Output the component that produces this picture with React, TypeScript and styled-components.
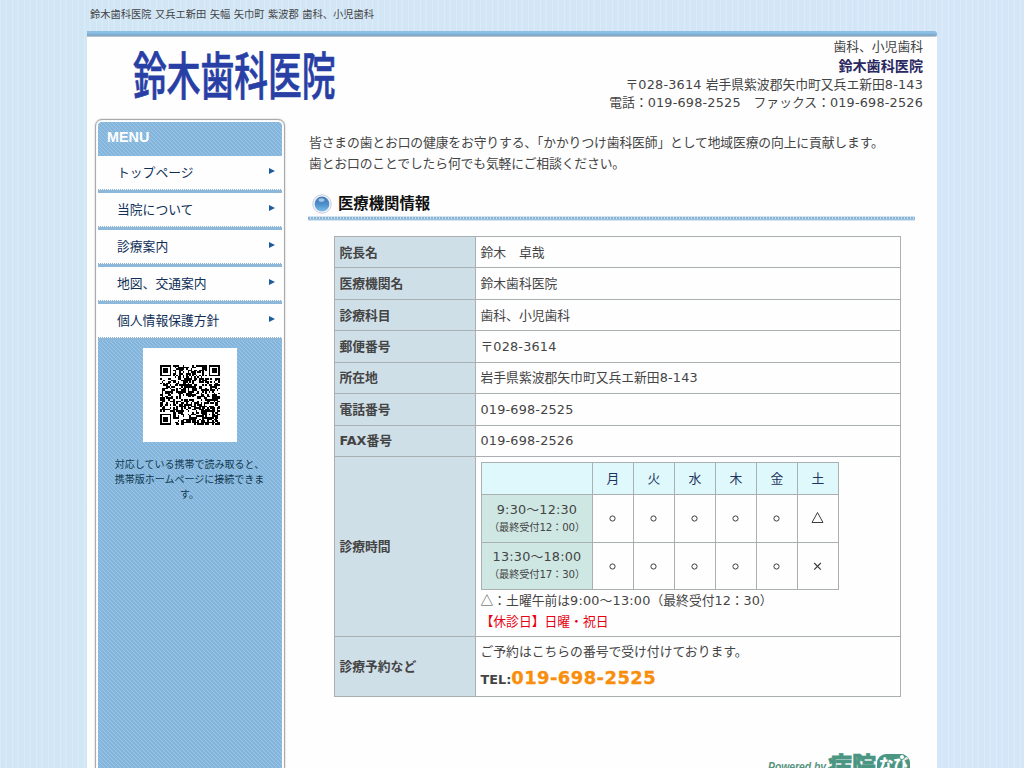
import React from "react";
import styled, { createGlobalStyle, css } from "styled-components";

const sans = `"DejaVu Sans", "Noto Sans CJK JP", sans-serif`;
const hatch = css`
  background-color: #84b6dd;
  background-image: repeating-linear-gradient(45deg, #9dc6e5 0 0.75px, transparent 0.75px 2.83px);
`;

const GlobalStyle = createGlobalStyle`
  * { box-sizing: border-box; }
  body {
    margin: 0;
    color: #444;
    font: 12.8px/21px ${sans};
    background:
      repeating-linear-gradient(90deg, rgba(255,255,255,.22) 0 1px, transparent 1px 5px, rgba(255,255,255,.13) 5px 7px, transparent 7px 12px),
      linear-gradient(90deg, #d1e6f5, #d4e6f8);
  }
`;

const Page = styled.div`
  width: 850px;
  height: 768px;
  margin: 0 87px;
  overflow: hidden;
  display: flex;
  flex-direction: column;
`;
const Tagline = styled.h1`
  height: 31px;
  flex: none;
  margin: 0;
  padding: 4px 0 0 3px;
  font-size: 10.24px;
  line-height: 20px;
  font-weight: 400;
  word-spacing: 0.3px;
  white-space: nowrap;
`;
const TopBar = styled.div`
  height: 6px;
  flex: none;
  border-radius: 0 3px 3px 0;
  background: linear-gradient(#8bbfe4 0 2px, #77a9d1 4px, #98a5b0 5px, #dbe5ed 6px);
`;
const Sheet = styled.div`
  flex: 1;
  min-height: 0;
  background: #fefefe;
`;
const Header = styled.header`
  display: flex;
  justify-content: space-between;
  height: 82px;
  padding-right: 14px;
`;
const Logo = styled.div`
  margin: 7px 0 0 46px;
  width: 204px;
  height: 58px;
  font: 500 51px/58px "Noto Sans CJK JP", sans-serif;
  color: #283fa5;
  -webkit-text-stroke: 0.7px #283fa5;
  white-space: nowrap;
  transform: scaleX(0.662);
  transform-origin: 0 0;
`;
const Contact = styled.address`
  padding-top: 0.5px;
  font-style: normal;
  text-align: right;
  line-height: 18px;
  white-space: nowrap;
`;
const ClinicName = styled.div`
  font-size: 14.1px;
  line-height: 20px;
  font-weight: 700;
  color: #2a2862;
`;
const Num = styled.span`
  letter-spacing: 0.2px;
`;

const Columns = styled.div`
  display: flex;
  align-items: flex-start;
`;
const Sidebar = styled.nav`
  width: 190px;
  height: 670px;
  flex: none;
  margin-left: 8px;
  padding: 2px;
  border: 1px solid #aaa;
  border-radius: 7px;
  box-shadow: inset 0 0 1px #bbb, 0 0 2px #bbb;
  background: #fff;
`;
const SidebarBody = styled.div`
  height: 100%;
  border-radius: 4px 4px 0 0;
  ${hatch}
`;
const MenuTitle = styled.div`
  height: 34px;
  padding: 5px 0 0 9px;
  font: bold 14.4px/21px "Liberation Sans", sans-serif;
  color: #fff;
`;
const MenuItem = styled.a`
  display: flex;
  justify-content: space-between;
  height: 37px;
  padding: 7px 7px 0 19px;
  border-bottom: 3px solid #8db8d9;
  background: repeating-linear-gradient(90deg, #8db3d0 0 1px, #fff 1px 2px) bottom / 100% 1px no-repeat padding-box, #fefefe;
  color: #103058;
  line-height: 20px;
`;
const Arrow = styled.span`
  width: 0;
  height: 0;
  margin-top: 5px;
  border: 3.5px solid transparent;
  border-left: 6px solid #1d5d9b;
  border-right: 0;
`;
const QrFrame = styled.div`
  width: 94px;
  height: 94px;
  margin: 7px auto 15px;
  padding: 17px;
  background: #fff;
`;
const QrNote = styled.p`
  margin: 0;
  padding: 0 16px 0 15px;
  font-size: 10px;
  line-height: 15px;
  text-align: center;
  color: #103850;
`;

const Main = styled.main`
  flex: 1;
  margin: 13px 22px 0 24px;
`;
const Intro = styled.p`
  margin: 0;
  height: 58px;
  letter-spacing: -0.13px;
  white-space: nowrap;
`;
const SectionTitle = styled.h2`
  display: flex;
  align-items: center;
  height: 31px;
  margin: 0 0 15px -1px;
  padding: 0 0 3px 4px;
  gap: 6px;
  color: #111;
  font-size: 15.36px;
  line-height: 24px;
  background:
    linear-gradient(#a3c3dc, #a3c3dc) bottom 1px left / 100% 1px no-repeat,
    repeating-linear-gradient(90deg, #85b2d7 0 2px, #c8dfee 2px 3px) bottom 2px left / 100% 2px no-repeat,
    linear-gradient(#d3e4f0, #d3e4f0) bottom / 100% 5px no-repeat;
`;

const InfoTable = styled.table`
  width: 567px;
  margin-left: 25px;
  border-collapse: collapse;
  table-layout: fixed;
  td, th { border: 1px solid #aaafb2; }
`;
const InfoRow = styled.tr<{ $height?: number }>`
  height: ${(p) => p.$height ?? 31.45}px;
`;
const Label = styled.th`
  width: 141px;
  padding: 0 4.4px;
  text-align: left;
  background: #cfdfe8;
`;
const Value = styled.td`
  padding: 0 4.5px;
`;

const HoursTable = styled.table`
  width: 358px;
  margin: 1px 0 0 0.5px;
  border-collapse: collapse;
  table-layout: fixed;
  text-align: center;
  td, th { padding: 0; }
`;
const DayHead = styled.th<{ $width: number }>`
  width: ${(p) => p.$width}px;
  height: 32px;
  background: #dff8fb;
  color: #1d3462;
  font-weight: 400;
`;
const Slot = styled.th`
  height: 47.6px;
  background: #cee7e3;
  font-weight: 400;
  line-height: 18px;
  small { display: block; font-size: 10.24px; line-height: 17px; letter-spacing: -0.15px; white-space: nowrap; }
`;
const Mark = styled.td`
  svg { display: block; margin: 0 auto; }
`;
const Symbol = styled.span`
  font-family: "Noto Sans CJK JP", sans-serif;
`;
const Note = styled.div`
  line-height: 20.5px;
`;
const Closed = styled(Note)`
  color: #e60012;
`;
const Tel = styled.div`
  margin-top: 2px;
  font-weight: 700;
  line-height: 27px;
  strong { font-size: 17.92px; letter-spacing: 0.45px; color: #f88e0b; -webkit-text-stroke: 0.3px #f88e0b; }
`;
const Powered = styled.footer`
  display: flex;
  justify-content: flex-end;
  margin: 54px 3px 0 0;
`;

const N = 37;
const inFinder = (x: number, y: number) => (x < 8 && y < 8) || (x >= N - 8 && y < 8) || (x < 8 && y >= N - 8);
const inAlign = (x: number, y: number) => Math.abs(x - 30) <= 2 && Math.abs(y - 30) <= 2;

function qrPath() {
  let seed = 2525;
  let d = "";
  for (let y = 0; y < N; y++) {
    for (let x = 0; x < N; x++) {
      seed = (seed * 1103515245 + 12345) % 2147483648;
      let on = (seed >> 16) % 100 < 51;
      if (inFinder(x, y)) {
        const fx = x > 20 ? x - 30 : x;
        const fy = y > 20 ? y - 30 : y;
        const r = Math.max(Math.abs(fx - 3), Math.abs(fy - 3));
        on = r === 3 || r <= 1;
      } else if (inAlign(x, y)) {
        on = Math.max(Math.abs(x - 30), Math.abs(y - 30)) !== 1;
      } else if (x === 6 || y === 6) {
        on = (x + y) % 2 === 0;
      }
      if (on) d += `M${x} ${y}h1v1h-1z`;
    }
  }
  return d;
}

const QrCode = () => (
  <svg width="60" height="60" viewBox="0 0 37 37" shapeRendering="crispEdges">
    <path d={qrPath()} fill="#000" />
  </svg>
);

const Orb = () => (
  <svg width="20" height="20" viewBox="0 0 20 20">
    <defs>
      <linearGradient id="orb" x1="0" y1="0" x2="0" y2="1">
        <stop offset="0" stopColor="#4379b4" />
        <stop offset="0.5" stopColor="#4c8dcb" />
        <stop offset="1" stopColor="#7dbce9" />
      </linearGradient>
    </defs>
    <circle cx="10" cy="10" r="9.2" fill="#f5f5f9" stroke="#c8cbd8" />
    <circle cx="10" cy="10" r="7.4" fill="url(#orb)" />
    <ellipse cx="9.5" cy="6" rx="3" ry="1.8" fill="#c2dcf2" opacity=".75" />
  </svg>
);

const MarkIcon = ({ kind }: { kind: string }) => (
  <svg width="14" height="14" viewBox="0 0 14 14" fill="none" stroke="#3c3c3c">
    {kind === "o" && <circle cx="6.5" cy="7.5" r="2.6" />}
    {kind === "t" && <path d="M1 11.5 6.5 1.5l5.5 10z" />}
    {kind === "x" && <path d="m3.2 4 6.6 6.6m0-6.6-6.6 6.6" strokeWidth="1.2" />}
  </svg>
);

const PoweredLogo = () => (
  <svg width="144" height="32" viewBox="0 0 144 32" fontFamily='"Noto Sans CJK JP", sans-serif' fontWeight="900">
    <text x="0" y="20" fontFamily='"Liberation Sans", sans-serif' fontSize="12" fontStyle="italic" fontWeight="700" fill="#579480" textLength="58" lengthAdjust="spacingAndGlyphs">Powered by</text>
    <text x="60" y="23" fontSize="24" fill="#4b9682" stroke="#4b9682" strokeWidth="0.6">病院</text>
    <rect x="109" y="3" width="33" height="28" rx="9" fill="#4b9682" />
    <text x="111" y="20" fontSize="16" fill="#fff" textLength="29" lengthAdjust="spacingAndGlyphs">なび</text>
    <circle cx="134" cy="6" r="2.5" fill="#fff" stroke="#4b9682" />
  </svg>
);

const menu = ["トップページ", "当院について", "診療案内", "地図、交通案内", "個人情報保護方針"];
const info: [string, React.ReactNode][] = [
  ["院長名", "鈴木　卓哉"],
  ["医療機関名", "鈴木歯科医院"],
  ["診療科目", "歯科、小児歯科"],
  ["郵便番号", <>〒<Num>028-3614</Num></>],
  ["所在地", <>岩手県紫波郡矢巾町又兵エ新田<Num>8-143</Num></>],
  ["電話番号", <Num>019-698-2525</Num>],
  ["FAX番号", <Num>019-698-2526</Num>],
];
const slots = [
  { time: "9:30～12:30", last: "（最終受付12：00）", marks: "ooooot" },
  { time: "13:30～18:00", last: "（最終受付17：30）", marks: "ooooox" },
];

export default function App() {
  return (
    <>
      <GlobalStyle />
      <Page>
        <Tagline>鈴木歯科医院 又兵エ新田 矢幅 矢巾町 紫波郡 歯科、小児歯科</Tagline>
        <TopBar />
        <Sheet>
          <Header>
            <Logo>鈴木歯科医院</Logo>
            <Contact>
              <div>歯科、小児歯科</div>
              <ClinicName>鈴木歯科医院</ClinicName>
              <div>〒<Num>028-3614</Num> 岩手県紫波郡矢巾町又兵エ新田<Num>8-143</Num></div>
              <div>電話：<Num>019-698-2525</Num>　ファックス：<Num>019-698-2526</Num></div>
            </Contact>
          </Header>
          <Columns>
            <Sidebar>
              <SidebarBody>
                <MenuTitle>MENU</MenuTitle>
                {menu.map((m) => (
                  <MenuItem key={m}>{m}<Arrow /></MenuItem>
                ))}
                <QrFrame><QrCode /></QrFrame>
                <QrNote>対応している携帯で読み取ると、携帯版ホームページに接続できます。</QrNote>
              </SidebarBody>
            </Sidebar>
            <Main>
              <Intro>
                皆さまの歯とお口の健康をお守りする、「かかりつけ歯科医師」として地域医療の向上に貢献します。
                <br />
                歯とお口のことでしたら何でも気軽にご相談ください。
              </Intro>
              <SectionTitle><Orb />医療機関情報</SectionTitle>
              <InfoTable>
                <tbody>
                  {info.map(([label, value]) => (
                    <InfoRow key={label}>
                      <Label>{label}</Label>
                      <Value>{value}</Value>
                    </InfoRow>
                  ))}
                  <InfoRow $height={180}>
                    <Label>診療時間</Label>
                    <Value>
                      <HoursTable>
                        <tbody>
                          <tr>
                            <DayHead $width={111} />
                            {[..."月火水木金土"].map((d) => <DayHead key={d} $width={41}>{d}</DayHead>)}
                          </tr>
                          {slots.map((s) => (
                            <tr key={s.time}>
                              <Slot><Num>{s.time}</Num><small>{s.last}</small></Slot>
                              {[...s.marks].map((k, i) => <Mark key={i}><MarkIcon kind={k} /></Mark>)}
                            </tr>
                          ))}
                        </tbody>
                      </HoursTable>
                      <Note><Symbol>△</Symbol>：土曜午前は<Num>9:00～13:00</Num>（最終受付12：30）</Note>
                      <Closed>【休診日】日曜・祝日</Closed>
                    </Value>
                  </InfoRow>
                  <InfoRow $height={60}>
                    <Label>診療予約など</Label>
                    <Value>
                      ご予約はこちらの番号で受け付けております。
                      <Tel>TEL:<strong>019-698-2525</strong></Tel>
                    </Value>
                  </InfoRow>
                </tbody>
              </InfoTable>
              <Powered><PoweredLogo /></Powered>
            </Main>
          </Columns>
        </Sheet>
      </Page>
    </>
  );
}
